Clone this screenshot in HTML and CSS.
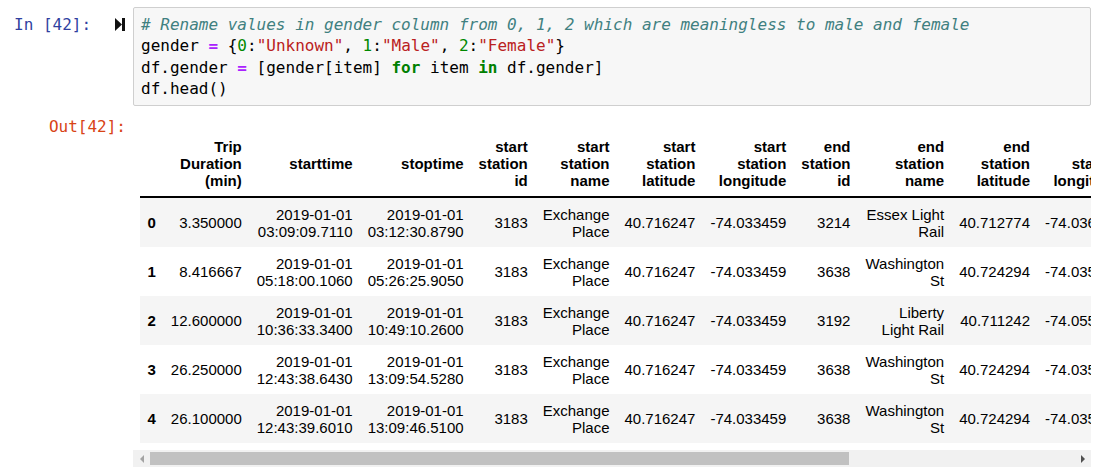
FILE: index.html
```html
<!DOCTYPE html>
<html>
<head>
<meta charset="utf-8">
<link rel="stylesheet" href="styles.css">
</head>
<body>
<div class="cell">
  <div class="row input-row">
    <div class="prompt in-prompt">
      <span>In [42]:</span>
      <svg class="run-icon" width="10" height="15" viewBox="0 0 10 15"><polygon points="0,1 7,7.5 0,14" fill="#111"/><rect x="7" y="1" width="3" height="13" fill="#111"/></svg>
    </div>
    <pre class="code"><span class="cm"># Rename values in gender column from 0, 1, 2 which are meaningless to male and female</span>
gender <span class="op">=</span> {<span class="nu">0</span>:<span class="st">"Unknown"</span>, <span class="nu">1</span>:<span class="st">"Male"</span>, <span class="nu">2</span>:<span class="st">"Female"</span>}
df.gender <span class="op">=</span> [gender[item] <span class="kw">for</span> item <span class="kw">in</span> df.gender]
df.head()</pre>
  </div>
  <div class="row output-row">
    <div class="prompt out-prompt">Out[42]:</div>
    <div class="out-area">
      <div class="table-wrap">
        <table class="df">
          <thead>
            <tr>
              <th></th>
              <th>Trip Duration (min)</th>
              <th>starttime</th>
              <th>stoptime</th>
              <th>start station id</th>
              <th>start station name</th>
              <th>start station latitude</th>
              <th>start station longitude</th>
              <th>end station id</th>
              <th>end station name</th>
              <th>end station latitude</th>
              <th>end station longitude</th>
              <th>bikeid</th>
              <th>usertype</th>
              <th>birth year</th>
              <th>gender</th>
            </tr>
          </thead>
          <tbody>
            <tr>
              <th>0</th><td>3.350000</td><td>2019-01-01 03:09:09.7110</td><td>2019-01-01 03:12:30.8790</td><td>3183</td><td>Exchange Place</td><td>40.716247</td><td>-74.033459</td><td>3214</td><td>Essex Light Rail</td><td>40.712774</td><td>-74.036486</td><td>29203</td><td>Subscriber</td><td>1985</td><td>Male</td>
            </tr>
            <tr>
              <th>1</th><td>8.416667</td><td>2019-01-01 05:18:00.1060</td><td>2019-01-01 05:26:25.9050</td><td>3183</td><td>Exchange Place</td><td>40.716247</td><td>-74.033459</td><td>3638</td><td>Washington St</td><td>40.724294</td><td>-74.035483</td><td>29604</td><td>Subscriber</td><td>1982</td><td>Male</td>
            </tr>
            <tr>
              <th>2</th><td>12.600000</td><td>2019-01-01 10:36:33.3400</td><td>2019-01-01 10:49:10.2600</td><td>3183</td><td>Exchange Place</td><td>40.716247</td><td>-74.033459</td><td>3192</td><td>Liberty Light Rail</td><td>40.711242</td><td>-74.055701</td><td>29356</td><td>Subscriber</td><td>1978</td><td>Female</td>
            </tr>
            <tr>
              <th>3</th><td>26.250000</td><td>2019-01-01 12:43:38.6430</td><td>2019-01-01 13:09:54.5280</td><td>3183</td><td>Exchange Place</td><td>40.716247</td><td>-74.033459</td><td>3638</td><td>Washington St</td><td>40.724294</td><td>-74.035483</td><td>29243</td><td>Customer</td><td>1969</td><td>Unknown</td>
            </tr>
            <tr>
              <th>4</th><td>26.100000</td><td>2019-01-01 12:43:39.6010</td><td>2019-01-01 13:09:46.5100</td><td>3183</td><td>Exchange Place</td><td>40.716247</td><td>-74.033459</td><td>3638</td><td>Washington St</td><td>40.724294</td><td>-74.035483</td><td>29670</td><td>Customer</td><td>1969</td><td>Unknown</td>
            </tr>
          </tbody>
        </table>
      </div>
      <div class="hscroll">
        <div class="arrow-box"><span class="arrow-left"></span></div>
        <div class="track"><div class="thumb"></div></div>
        <div class="arrow-box"><span class="arrow-right"></span></div>
      </div>
    </div>
  </div>
</div>
</body>
</html>
```

FILE: styles.css
```css
html, body {
  margin: 0;
  background: #ffffff;
}

body {
  padding: 7px 19px 0 0;
  font-family: "Liberation Sans", Arial, sans-serif;
  color: #000;
}

.row {
  display: flex;
  align-items: flex-start;
}

.prompt {
  flex: none;
  width: 133px;
  box-sizing: border-box;
  font-family: "DejaVu Sans Mono", monospace;
  font-size: 16px;
  line-height: 21.25px;
}

.in-prompt {
  display: flex;
  align-items: flex-start;
  padding-top: 7px;
  padding-left: 14px;
  color: #303F9F;
}

.run-icon {
  flex: none;
  margin-left: 24px;
  margin-top: 3px;
}

.code {
  flex: 1;
  min-width: 0;
  margin: 0;
  box-sizing: border-box;
  border: 1px solid #cfcfcf;
  border-radius: 2px;
  background: #f7f7f7;
  padding: 6px 7px;
  font-family: "DejaVu Sans Mono", monospace;
  font-size: 16px;
  line-height: 21.25px;
  color: #000;
  white-space: pre;
  overflow: hidden;
}

.cm { color: #408080; font-style: italic; }
.op { color: #AA22FF; font-weight: bold; }
.nu { color: #008800; }
.st { color: #BA2121; }
.kw { color: #008000; font-weight: bold; }

.output-row {
  margin-top: 6px;
}

.out-prompt {
  padding-top: 4px;
  padding-right: 7px;
  text-align: right;
  color: #D84315;
}

.out-area {
  flex: 1;
  min-width: 0;
  overflow: hidden;
  padding-top: 18px;
}

.table-wrap {
  padding-left: 7px;
}

.df {
  border-collapse: collapse;
  border-spacing: 0;
  margin-bottom: 7px;
  font-size: 15px;
  line-height: 17px;
}

.df th,
.df td {
  padding: 7.5px;
  text-align: right;
  vertical-align: middle;
  white-space: normal;
}

.df th {
  font-weight: bold;
}

.df td {
  font-weight: normal;
}

.df thead {
  border-bottom: 2px solid #000;
}

.df tbody tr:nth-child(odd) {
  background: #f5f5f5;
}

.hscroll {
  display: flex;
  height: 17px;
  background: #f1f1f1;
}

.arrow-box {
  flex: none;
  width: 17px;
  height: 17px;
  display: flex;
  align-items: center;
  justify-content: center;
}

.arrow-left {
  width: 0;
  height: 0;
  border-top: 4px solid transparent;
  border-bottom: 4px solid transparent;
  border-right: 4px solid #a3a3a3;
}

.arrow-right {
  width: 0;
  height: 0;
  border-top: 4px solid transparent;
  border-bottom: 4px solid transparent;
  border-left: 4px solid #505050;
}

.track {
  flex: 1;
  display: flex;
  align-items: center;
}

.thumb {
  width: 699px;
  height: 13px;
  background: #c1c1c1;
}
```
